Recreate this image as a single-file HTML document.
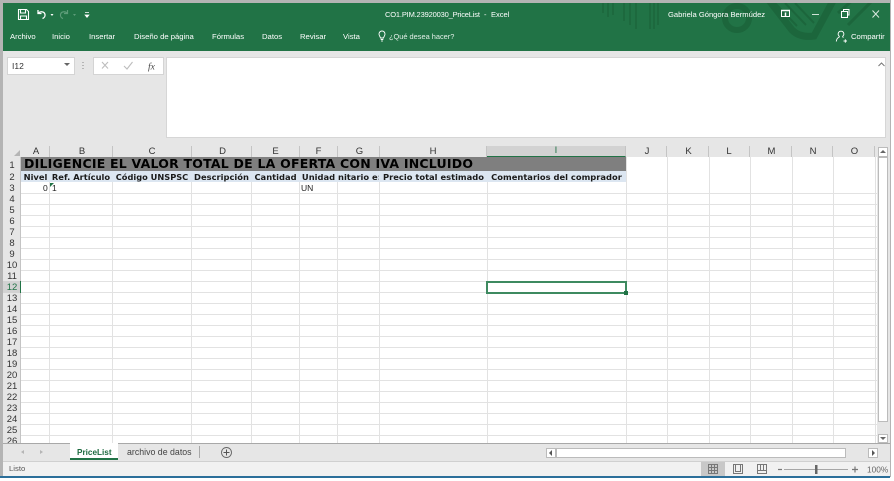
<!DOCTYPE html>
<html><head><meta charset="utf-8">
<style>
html,body{margin:0;padding:0;background:#fff}
#p{position:relative;width:894px;height:481px;overflow:hidden;background:#fff;font-family:"Liberation Sans",sans-serif;filter:blur(.3px)}
#p div,#p span.a{position:absolute}
.t{position:absolute;white-space:nowrap;color:#fff;font-size:7.7px;line-height:10px}
.c{position:absolute;top:146px;height:11px;line-height:11px;text-align:center;font-size:9.5px;color:#333;border-right:1px solid #c4c4c4;box-sizing:border-box}
.s{padding-left:2px}
.r{position:absolute;left:3px;width:18px;height:11px;line-height:11px;text-align:center;font-size:9.5px;color:#333}
.h{position:absolute;top:171px;height:11px;font:bold 8.35px/13px "DejaVu Sans",sans-serif;color:#1a1a1a;text-align:center;white-space:nowrap;overflow:hidden}
.g{position:absolute;font-size:8.5px;line-height:11px;color:#222}
</style></head><body>
<div id="p">
<!-- window frame -->
<div style="left:0;top:0;width:891px;height:477px;background:#b4b4b4"></div>
<div style="left:3px;top:3px;width:887px;height:473px;background:#e6e6e6"></div>
<div style="left:0;top:476px;width:890px;height:1.5px;background:#2c6f9a"></div>
<!-- green title/ribbon -->
<div style="left:3px;top:3px;width:887px;height:47.5px;background:#217346"></div>
<svg style="position:absolute;left:600px;top:3px" width="290" height="47" viewBox="0 0 290 47">
<g fill="none" stroke="#1c663c">
<g stroke-width="1.5"><path d="M3 0v10M8 0v14M13 0v12M24 0v18M30 0v22M36 0v26M50 0v26M54 0v26M58 0v22"/></g>
<circle cx="137" cy="15" r="12" stroke-width="6"/>
<path d="M168 -4L192 27Q200 35 214 33L234 -4" stroke-width="7"/>
<path d="M175 0L197 23M185 0L206 22M195 0L214 20" stroke-width="2"/>
<path d="M238 10L255 -5M248 22L275 -5" stroke-width="3"/>
</g></svg>
<!-- QAT -->
<svg style="position:absolute;left:15px;top:6px" width="66" height="16" viewBox="0 0 66 16">
<g fill="none" stroke="#fff" stroke-width="1.1">
<path d="M3.5 3.5h8l2 2v8h-10z"/><path d="M5.500 3.500v3.500h5v-3.500M5.500 13.500v-3.500h6v3.500"/>
<path d="M23 4v3.500h3.500" stroke-width="1.3"/><path d="M23.500 7c2-2 6-1.500 6.500 1.500.3 2-1 3.500-2.500 4" stroke-width="1.3"/>
</g>
<path d="M35.500 8h3l-1.500 2z" fill="#fff"/>
<g fill="none" stroke="#5d9c79" stroke-width="1.200"><path d="M52.500 4v3.500h-3.500"/><path d="M52 7c-2-2-6-1.500-6.500 1.500-.3 2 1 3.500 2.500 4"/></g>
<path d="M58 8h3l-1.500 2z" fill="#5d9c79"/>
</svg>
<svg style="position:absolute;left:84px;top:11px" width="6" height="8" viewBox="0 0 6 8"><path d="M1 1.500h4M1 4h4l-2 2.500z" fill="#fff" stroke="#fff" stroke-width=".7"/></svg>
<span class="t" style="left:385px;top:10px;font-size:7.5px;letter-spacing:-.17px">CO1.PIM.23920030_PriceList</span>
<span class="t" style="left:484px;top:10px;font-size:7.5px">-</span>
<span class="t" style="left:491px;top:10px;font-size:7.5px">Excel</span>
<span class="t" style="left:668px;top:10px;font-size:7.6px">Gabriela Góngora Bermúdez</span>
<svg style="position:absolute;left:778px;top:7px" width="112" height="14" viewBox="0 0 112 14"><g fill="none" stroke="#fff">
<rect x="3.500" y="3.500" width="8" height="6"/><path d="M3 3.500h9" stroke-width="1.500"/><path d="M7.500 9V5.500" stroke-width="1.500"/>
<path d="M34 7.500h7" stroke="#cfe3d7"/>
<rect x="63.500" y="4.500" width="6" height="6"/><path d="M65.500 4.500v-2h5.500v5.500h-1.500"/>
<path d="M94.500 3.500l6.500 7M101 3.500l-6.500 7" stroke="#d9e8df"/></g></svg>
<span class="t" style="left:10px;top:32px">Archivo</span>
<span class="t" style="left:52px;top:32px">Inicio</span>
<span class="t" style="left:89px;top:32px">Insertar</span>
<span class="t" style="left:134px;top:32px">Diseño de página</span>
<span class="t" style="left:212px;top:32px">Fórmulas</span>
<span class="t" style="left:262px;top:32px">Datos</span>
<span class="t" style="left:300px;top:32px">Revisar</span>
<span class="t" style="left:343px;top:32px">Vista</span>
<svg style="position:absolute;left:377px;top:30px" width="10" height="12" viewBox="0 0 10 12"><path d="M3.500 8C3.200 6.500 2 5.800 2 4a3 3 0 0 1 6 0c0 1.800-1.200 2.500-1.500 4zM3.700 9.500h2.600M4.200 11h1.600" fill="none" stroke="#fff" stroke-width=".9"/></svg>
<span class="t" style="left:389px;top:32px;color:#e2efe7;font-size:7.4px">¿Qué desea hacer?</span>
<svg style="position:absolute;left:835px;top:30px" width="13" height="13" viewBox="0 0 13 13"><path d="M6 1.200a2.800 2.800 0 0 1 2 4.800c-.6.600-.4 1 .5 1.500M6 1.200a2.800 2.800 0 0 0-2 4.800c.6.600.4 1-.5 1.500C2 8.200 1.500 10 1.300 11.500M8.500 11h3.500M10.300 9.200v3.500" fill="none" stroke="#fff" stroke-width=".9"/></svg>
<span class="t" style="left:851px;top:32px">Compartir</span>
<!-- formula bar -->
<div style="left:3px;top:50.500px;width:887px;height:95.500px;background:#e6e6e6"></div>
<div style="left:7px;top:57px;width:66px;height:16px;background:#fff;border:1px solid #d4d4d4"></div>
<span class="t" style="left:12px;top:61px;color:#333;font-size:8.500px">I12</span>
<svg style="position:absolute;left:64px;top:63px" width="6" height="4"><path d="M0 0h6l-3 3z" fill="#666"/></svg>
<div style="left:82px;top:62px;width:2px;height:1px;background:#b5b5b5;box-shadow:0 3px #b5b5b5,0 6px #b5b5b5"></div>
<div style="left:93px;top:57px;width:69px;height:16px;background:#fff;border:1px solid #d4d4d4"></div>
<svg style="position:absolute;left:98px;top:59px" width="62" height="14" viewBox="0 0 62 14"><g fill="none" stroke="#bdbdbd" stroke-width="1.100"><path d="M4 3l6 6.500M10 3l-6 6.500"/><path d="M26 7l3 3 5.500-7"/></g><text x="50" y="10.500" font-family="Liberation Serif,serif" font-style="italic" font-size="9.500" fill="#444">fx</text></svg>
<div style="left:166px;top:57px;width:720px;height:81px;background:#fff;border:1px solid #d6d6d6;box-sizing:border-box"></div>
<svg style="position:absolute;left:878px;top:62px" width="7" height="5"><path d="M.5 4L3.500 1 6.500 4" fill="none" stroke="#777" stroke-width="1"/></svg>
<!-- sheet area -->
<div style="left:3px;top:146px;width:874px;height:297px;background:#fff"></div>
<!-- grid rows -->
<div style="left:21px;top:183px;width:856px;height:260px;background-image:linear-gradient(to bottom,transparent 0,transparent 10px,#e2e2e2 10px,#e2e2e2 11px);background-size:100% 11px"></div>
<!-- grid cols -->
<svg style="position:absolute;left:0;top:157px" width="877" height="286"><g stroke="#e2e2e2" stroke-width="1"><path d="M49.500 0V286M112.500 0V286M191.500 0V286M251.500 0V286M299.500 0V286M337.500 0V286M379.500 0V286M487.500 0V286M626.500 0V286M667.500 0V286M709.500 0V286M750.500 0V286M792.500 0V286M833.500 0V286M875.500 0V286"/></g></svg>
<!-- col headers -->
<div style="left:3px;top:146px;width:874px;height:11px;background:#e6e6e6"></div>
<svg style="position:absolute;left:14px;top:150px" width="6" height="6"><path d="M6 0v6H0z" fill="#b5b5b5"/></svg>
<div class="c s" style="left:21px;width:29px">A</div>
<div class="c s" style="left:50px;width:63px">B</div>
<div class="c" style="left:113px;width:79px">C</div>
<div class="c s" style="left:192px;width:60px">D</div>
<div class="c" style="left:252px;width:48px">E</div>
<div class="c" style="left:300px;width:38px">F</div>
<div class="c s" style="left:338px;width:42px">G</div>
<div class="c" style="left:380px;width:107px">H</div>
<div class="c" style="left:487px;width:139px;background:#d2d2d2;border-bottom:1px solid #217346;color:#217346;line-height:10px">I</div>
<div class="c s" style="left:626px;width:41px">J</div>
<div class="c s" style="left:667px;width:42px">K</div>
<div class="c" style="left:709px;width:41px">L</div>
<div class="c s" style="left:750px;width:42px">M</div>
<div class="c s" style="left:792px;width:41px">N</div>
<div class="c s" style="left:833px;width:42px">O</div>
<!-- row headers -->
<div style="left:3px;top:157px;width:18px;height:286px;background:#e6e6e6;border-right:1px solid #c4c4c4;box-sizing:border-box"></div>
<div class="r" style="top:160px">1</div>
<div class="r" style="top:172px">2</div>
<div class="r" style="top:183px">3</div>
<div class="r" style="top:194px">4</div>
<div class="r" style="top:205px">5</div>
<div class="r" style="top:216px">6</div>
<div class="r" style="top:227px">7</div>
<div class="r" style="top:238px">8</div>
<div class="r" style="top:249px">9</div>
<div class="r" style="top:260px">10</div>
<div class="r" style="top:271px">11</div>
<div style="left:3px;top:281px;width:18px;height:12px;background:#d2d2d2;border-right:1px solid #217346;box-sizing:border-box"></div>
<div class="r" style="top:282px;color:#217346">12</div>
<div class="r" style="top:293px">13</div>
<div class="r" style="top:304px">14</div>
<div class="r" style="top:315px">15</div>
<div class="r" style="top:326px">16</div>
<div class="r" style="top:337px">17</div>
<div class="r" style="top:348px">18</div>
<div class="r" style="top:359px">19</div>
<div class="r" style="top:370px">20</div>
<div class="r" style="top:381px">21</div>
<div class="r" style="top:392px">22</div>
<div class="r" style="top:403px">23</div>
<div class="r" style="top:414px">24</div>
<div class="r" style="top:425px">25</div>
<div style="left:3px;top:436px;width:18px;height:7px;overflow:hidden"><div class="r" style="left:0;top:0">26</div></div>
<!-- row1 and row2 -->
<div style="left:21px;top:157px;width:605px;height:14px;background:#7f7f7f"></div>
<span class="a" style="left:24px;top:157px;font:bold 12.5px/14px 'DejaVu Sans',sans-serif;letter-spacing:.22px;color:#000;white-space:nowrap">DILIGENCIE EL VALOR TOTAL DE LA OFERTA CON IVA INCLUIDO</span>
<div style="left:21px;top:171px;width:605px;height:11px;background:#dce6f1"></div>
<div class="h" style="left:21px;width:29px">Nivel</div>
<div class="h" style="left:50px;width:62px">Ref. Artículo</div>
<div class="h" style="left:113px;width:78px;font-size:8.25px">Código UNSPSC</div>
<div class="h" style="left:192px;width:59px">Descripción</div>
<div class="h" style="left:252px;width:47px">Cantidad</div>
<div class="h" style="left:300px;width:37px">Unidad</div>
<div class="h" style="left:338px;width:41px">nitario e:</div>
<div class="h" style="left:380px;width:107px">Precio total estimado</div>
<div class="h" style="left:487px;width:139px">Comentarios del comprador</div>
<!-- row3 -->
<span class="g" style="left:43px;top:183px">0</span>
<span class="g" style="left:52px;top:183px">1</span>
<svg style="position:absolute;left:50px;top:183px" width="4" height="4"><path d="M0 0h4L0 4z" fill="#217346"/></svg>
<span class="g" style="left:301px;top:183px">UN</span>
<!-- selection -->
<div style="left:486px;top:281px;width:141px;height:13px;border:2px solid #3e8a60;box-sizing:border-box"></div>
<div style="left:624px;top:291px;width:3.500px;height:3.500px;background:#217346"></div>
<!-- vscroll -->
<div style="left:877px;top:146px;width:13px;height:297px;background:#e6e6e6"></div>
<div style="left:878px;top:147px;width:10px;height:10px;background:#fff;border:1px solid #bbb;box-sizing:border-box"></div>
<svg style="position:absolute;left:880px;top:150px" width="6" height="4"><path d="M3 0l3 3H0z" fill="#666"/></svg>
<div style="left:878px;top:157px;width:10px;height:265px;background:#fff;border:1px solid #bbb;box-sizing:border-box"></div>
<div style="left:878px;top:434px;width:10px;height:9px;background:#fff;border:1px solid #bbb;box-sizing:border-box"></div>
<svg style="position:absolute;left:880px;top:437px" width="6" height="4"><path d="M0 0h6L3 3z" fill="#666"/></svg>
<!-- tab bar -->
<div style="left:3px;top:443px;width:887px;height:18px;background:#e6e6e6;border-top:1px solid #a8a8a8;box-sizing:border-box"></div>
<svg style="position:absolute;left:20px;top:449px" width="26" height="6"><path d="M4 1L1 3l3 2z M20 1l3 2-3 2z" fill="#b5b5b5"/></svg>
<div style="left:70px;top:443px;width:48px;height:17px;background:#fff;border-bottom:2px solid #217346;box-sizing:border-box"></div>
<span class="a" style="left:77px;top:447px;font:bold 8.2px/11px 'Liberation Sans',sans-serif;color:#1c6a3f;white-space:nowrap">PriceList</span>
<span class="a" style="left:127px;top:447px;font:8.8px/11px 'Liberation Sans',sans-serif;color:#444;white-space:nowrap">archivo de datos</span>
<div style="left:199px;top:446px;width:1px;height:12px;background:#a8a8a8"></div>
<svg style="position:absolute;left:220px;top:446px" width="13" height="13"><circle cx="6.500" cy="6.500" r="5" fill="none" stroke="#666" stroke-width=".9"/><path d="M3.500 6.500h6M6.500 3.500v6" stroke="#555" stroke-width="1"/></svg>
<!-- hscroll -->
<div style="left:546px;top:448px;width:10px;height:10px;background:#fff;border:1px solid #bbb;box-sizing:border-box"></div>
<svg style="position:absolute;left:549px;top:450px" width="4" height="6"><path d="M3 0v6L0 3z" fill="#555"/></svg>
<div style="left:556px;top:448px;width:290px;height:10px;background:#fff;border:1px solid #bbb;box-sizing:border-box"></div>
<div style="left:868px;top:448px;width:10px;height:10px;background:#fff;border:1px solid #bbb;box-sizing:border-box"></div>
<svg style="position:absolute;left:872px;top:450px" width="4" height="6"><path d="M0 0v6l3-3z" fill="#555"/></svg>
<!-- status -->
<div style="left:3px;top:461px;width:887px;height:15px;background:#f1f1f1;border-top:1px solid #d0d0d0;box-sizing:border-box"></div>
<span class="t" style="left:9px;top:464px;color:#555;font-size:7.7px">Listo</span>
<div style="left:701px;top:462px;width:24px;height:14px;background:#c8c8c8"></div>
<svg style="position:absolute;left:700px;top:462px" width="190" height="14" viewBox="0 0 190 14"><g fill="none" stroke="#777" stroke-width="1">
<path d="M8.500 2.500h9v9h-9zM11.500 2.500v9M14.500 2.500v9M8.500 5.500h9M8.500 8.500h9"/>
<path d="M33.500 2.500h9v9h-9zM35.500 2.500v7h5v-7"/>
<path d="M57.500 2.500h9v9h-9zM57.500 8.500h3v-6M66.500 8.500h-3v-6M60.500 8.500h3"/>
<path d="M78 7.500h4" stroke-width="1.200"/><path d="M84 7.500h64" stroke="#a6a6a6"/>
<path d="M152 7.500h6M155 4.500v6" stroke-width="1.200"/></g>
<rect x="115" y="3" width="2.500" height="9" fill="#666"/>
<text x="167" y="10.500" font-family="Liberation Sans,sans-serif" font-size="8.300" fill="#666">100%</text></svg>
</div>
</body></html>
